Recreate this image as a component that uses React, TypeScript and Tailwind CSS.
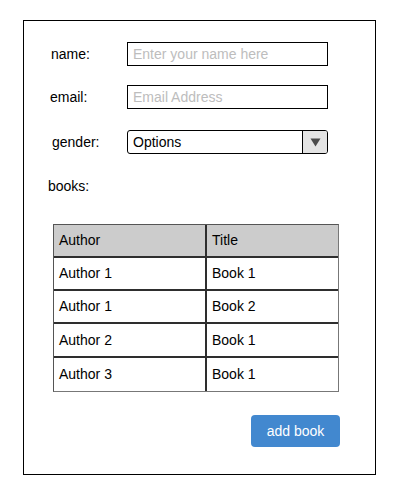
const books = [
  { author: 'Author 1', title: 'Book 1', h: 'h-[33px]' },
  { author: 'Author 1', title: 'Book 2', h: 'h-[33px]' },
  { author: 'Author 2', title: 'Book 1', h: 'h-[34px]' },
  { author: 'Author 3', title: 'Book 1', h: 'h-[33px]' },
]

function Field({ label, pad, children }: { label: string; pad: string; children: React.ReactNode }) {
  return (
    <div className="flex items-center">
      <div className={`w-[103px] ${pad}`}>{label}</div>
      {children}
    </div>
  )
}

export default function App() {
  return (
    <div className="bg-white w-[401px] h-[500px] pt-[20px] pl-[23px] text-[14px] text-black" style={{ fontFamily: '"Liberation Sans", Arial, sans-serif' }}>
      <div className="w-[353px] h-[455px] border border-black flex flex-col">
        <div className="mt-[21px]">
          <Field label="name:" pad="pl-[27px]">
            <input
              className="w-[201px] h-[24px] border border-black px-[5px] outline-none placeholder:text-[#bdbdbd]"
              placeholder="Enter your name here"
            />
          </Field>
        </div>
        <div className="mt-[19px]">
          <Field label="email:" pad="pl-[26px]">
            <input
              className="w-[201px] h-[24px] border border-black px-[5px] outline-none placeholder:text-[#bdbdbd]"
              placeholder="Email Address"
            />
          </Field>
        </div>
        <div className="mt-[21px]">
          <Field label="gender:" pad="pl-[28px]">
            <div className="w-[201px] h-[24px] border border-black rounded-[3px] flex overflow-hidden">
              <div className="flex-1 pl-[5px] flex items-center">Options</div>
              <div className="w-[25px] border-l border-black bg-[#e3e3e3] flex items-center justify-center">
                <svg width="11" height="9" viewBox="0 0 11 9">
                  <path d="M0.5 0.5 L10.5 0.5 L5.5 8.5 Z" fill="#4a4a4a" />
                </svg>
              </div>
            </div>
          </Field>
        </div>
        <div className="mt-[24px] pl-[24px] h-[16px] leading-[16px]">books:</div>
        <div className="mt-[30px] ml-[29px] w-[286px] border border-[#777] border-t-[#555] border-l-[#555]">
          <div className="flex h-[33px] bg-[#cccccc] border-b-2 border-[#2e2e2e]">
            <div className="w-[153px] pl-[5px] flex items-center border-r-2 border-[#2e2e2e]">Author</div>
            <div className="flex-1 pl-[5px] flex items-center">Title</div>
          </div>
          {books.map((b, i) => (
            <div key={i} className={`flex ${b.h} ${i < books.length - 1 ? 'border-b-2 border-[#2e2e2e]' : ''}`}>
              <div className="w-[153px] pl-[5px] flex items-center border-r-2 border-[#2e2e2e]">{b.author}</div>
              <div className="flex-1 pl-[5px] flex items-center">{b.title}</div>
            </div>
          ))}
        </div>
        <div className="mt-[23px] flex justify-end pr-[35px]">
          <button className="w-[89px] h-[32px] rounded-[4px] bg-[#4288cf] text-white text-[14px]">add book</button>
        </div>
      </div>
    </div>
  )
}
